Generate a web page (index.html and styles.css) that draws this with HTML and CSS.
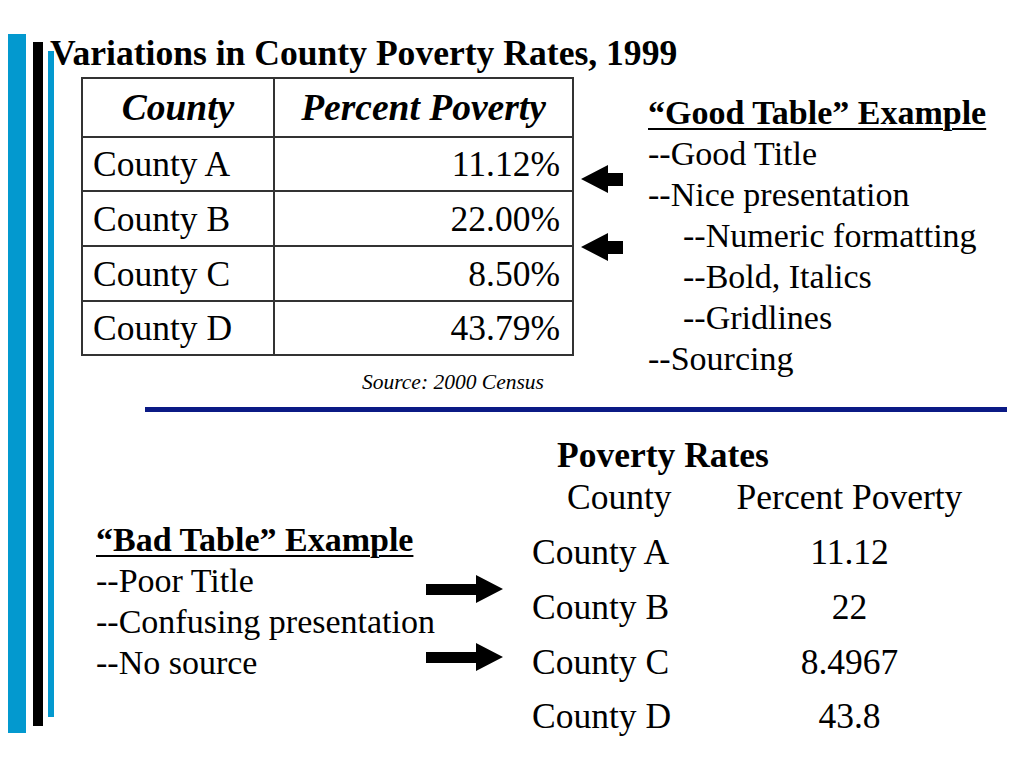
FILE: index.html
```html
<!DOCTYPE html>
<html>
<head>
<meta charset="utf-8">
<link rel="stylesheet" href="styles.css">
</head>
<body>
<div class="slide">
  <div class="bar bar-wide"></div>
  <div class="bar bar-black"></div>
  <div class="bar bar-thin"></div>

  <h1 class="title">Variations in County Poverty Rates, 1999</h1>

  <table class="good-table">
    <thead>
      <tr><th class="c1">County</th><th class="c2">Percent Poverty</th></tr>
    </thead>
    <tbody>
      <tr class="r1"><td>County A</td><td class="num">11.12%</td></tr>
      <tr class="r2"><td>County B</td><td class="num">22.00%</td></tr>
      <tr class="r3"><td>County C</td><td class="num">8.50%</td></tr>
      <tr class="r4"><td>County D</td><td class="num">43.79%</td></tr>
    </tbody>
  </table>

  <p class="source">Source: 2000 Census</p>

  <svg class="arrow arrow-l1" width="42" height="28" viewBox="0 0 42 28"><path d="M0 14 L27 0 L27 8 L42 8 L42 21 L27 21 L27 28 Z" fill="#000"/></svg>
  <svg class="arrow arrow-l2" width="42" height="28" viewBox="0 0 42 28"><path d="M0 14 L27 0 L27 8 L42 8 L42 21 L27 21 L27 28 Z" fill="#000"/></svg>

  <div class="notes good-notes">
    <div class="head">“Good Table” Example</div>
    <div>--Good Title</div>
    <div>--Nice presentation</div>
    <div class="ind">--Numeric formatting</div>
    <div class="ind">--Bold, Italics</div>
    <div class="ind">--Gridlines</div>
    <div>--Sourcing</div>
  </div>

  <div class="rule"></div>

  <div class="notes bad-notes">
    <div class="head">“Bad Table” Example</div>
    <div>--Poor Title</div>
    <div>--Confusing presentation</div>
    <div>--No source</div>
  </div>

  <svg class="arrow arrow-r1" width="77" height="28" viewBox="0 0 77 28"><path d="M77 14 L50 0 L50 9 L0 9 L0 20 L50 20 L50 28 Z" fill="#000"/></svg>
  <svg class="arrow arrow-r2" width="77" height="28" viewBox="0 0 77 28"><path d="M77 14 L50 0 L50 9 L0 9 L0 20 L50 20 L50 28 Z" fill="#000"/></svg>

  <div class="bad-table">
    <div class="bad-title">Poverty Rates</div>
    <div class="bad-grid">
      <div class="hdr-county">County</div><div class="val">Percent Poverty</div>
      <div>County A</div><div class="val">11.12</div>
      <div>County B</div><div class="val">22</div>
      <div>County C</div><div class="val">8.4967</div>
      <div>County D</div><div class="val">43.8</div>
    </div>
  </div>
</div>
</body>
</html>
```

FILE: styles.css
```css
html, body {
  margin: 0;
  padding: 0;
  background: #fff;
  font-family: "Liberation Serif", serif;
}

.slide {
  position: relative;
  width: 1024px;
  height: 768px;
  overflow: hidden;
  background: #fff;
  font-family: "Liberation Serif", serif;
  color: #000;
}

.bar {
  position: absolute;
}
.bar-wide {
  left: 8px;
  top: 34px;
  width: 18px;
  height: 699px;
  background: #0399cf;
}
.bar-black {
  left: 33px;
  top: 42px;
  width: 10px;
  height: 684px;
  background: #000;
}
.bar-thin {
  left: 48px;
  top: 51px;
  width: 6px;
  height: 666px;
  background: #0399cf;
}

.title {
  position: absolute;
  left: 50px;
  top: 32px;
  margin: 0;
  font-size: 35.6px;
  line-height: 42px;
  font-weight: bold;
  white-space: nowrap;
}

.good-table {
  position: absolute;
  left: 81px;
  top: 77px;
  border-collapse: collapse;
  border: 2px solid #333;
  font-size: 35.5px;
}
.good-table th,
.good-table td {
  border: 2px solid #333;
  padding: 0 12px 0 10px;
  white-space: nowrap;
}
.good-table th {
  height: 57px;
  padding: 0 10px;
  font-style: italic;
  font-weight: bold;
  font-size: 37.5px;
  text-align: center;
}
.good-table .c1 { width: 170px; }
.good-table .c2 { width: 277px; }
.good-table td {
  height: 52px;
  text-align: left;
}
.good-table .r2 td,
.good-table .r3 td { height: 53px; }
.good-table td.num { text-align: right; }

.source {
  position: absolute;
  left: 362px;
  top: 369px;
  margin: 0;
  font-size: 21.5px;
  line-height: 26px;
  font-style: italic;
  white-space: nowrap;
}

.arrow {
  position: absolute;
  display: block;
}
.arrow-l1 { left: 581px; top: 165px; }
.arrow-l2 { left: 581px; top: 233px; }
.arrow-r1 { left: 426px; top: 575px; }
.arrow-r2 { left: 426px; top: 643px; }

.notes {
  position: absolute;
  font-size: 34px;
  line-height: 41px;
  white-space: nowrap;
}
.notes .head {
  font-weight: bold;
  text-decoration: underline;
  text-decoration-thickness: 2px;
  text-underline-offset: 4px;
}
.notes .ind { padding-left: 35px; }
.good-notes { left: 648px; top: 92px; }
.bad-notes { left: 96px; top: 519px; }

.rule {
  position: absolute;
  left: 145px;
  top: 407px;
  width: 862px;
  height: 5px;
  background: #0b1a85;
}

.bad-table {
  position: absolute;
  left: 532px;
  top: 437px;
  font-size: 35.5px;
}
.bad-title {
  padding-left: 25px;
  font-weight: bold;
  font-size: 35.5px;
  line-height: 36px;
}
.bad-grid {
  display: grid;
  grid-template-columns: 180px 275px;
  grid-auto-rows: 54.75px;
  align-items: center;
  margin-top: -3px;
  white-space: nowrap;
}
.bad-grid .hdr-county { padding-left: 35px; }
.bad-grid .val { text-align: center; }
```
